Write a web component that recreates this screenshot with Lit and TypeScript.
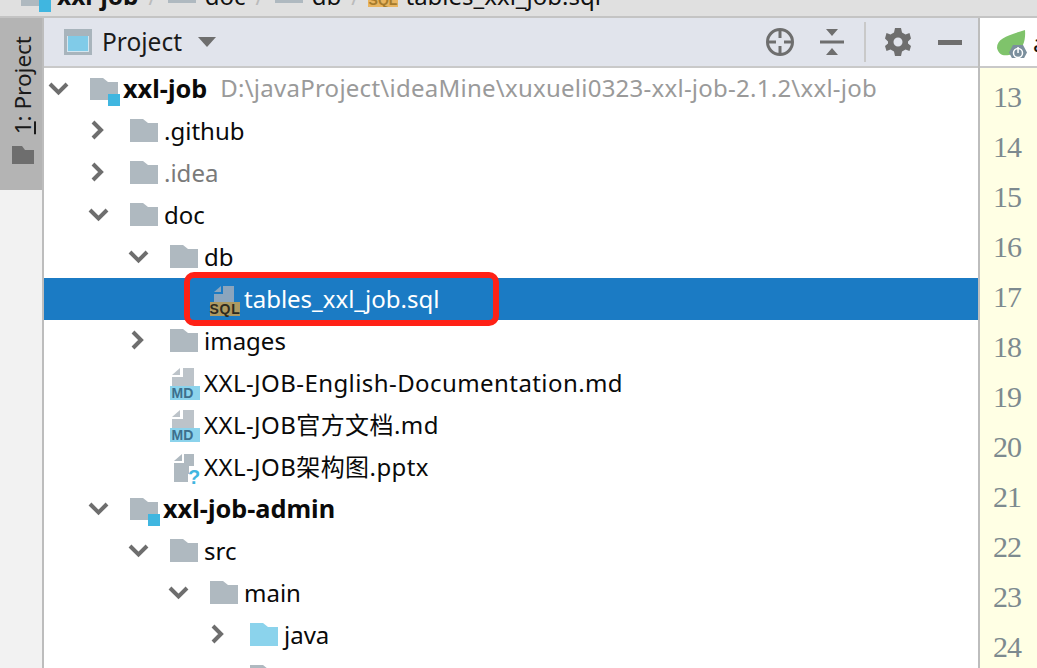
import { LitElement, html, css, svg } from "lit";
import { customElement } from "lit/decorators.js";

type Row = { depth: number; arrow?: "d" | "r"; icon: string; text: string; cls?: string; hint?: string };
const rows: Row[] = [
  { depth: 0, arrow: "d", icon: "module", text: "xxl-job", cls: "bold", hint: "D:\\javaProject\\ideaMine\\xuxueli0323-xxl-job-2.1.2\\xxl-job" },
  { depth: 1, arrow: "r", icon: "folder", text: ".github" },
  { depth: 1, arrow: "r", icon: "folder", text: ".idea", cls: "dim" },
  { depth: 1, arrow: "d", icon: "folder", text: "doc" },
  { depth: 2, arrow: "d", icon: "folder", text: "db" },
  { depth: 3, icon: "sql", text: "tables_xxl_job.sql", cls: "sel" },
  { depth: 2, arrow: "r", icon: "folder", text: "images" },
  { depth: 2, icon: "md", text: "XXL-JOB-English-Documentation.md", cls: "wide" },
  { depth: 2, icon: "md", text: "XXL-JOB官方文档.md", cls: "wide" },
  { depth: 2, icon: "unknown", text: "XXL-JOB架构图.pptx", cls: "wide" },
  { depth: 1, arrow: "d", icon: "module", text: "xxl-job-admin", cls: "bold" },
  { depth: 2, arrow: "d", icon: "folder", text: "src" },
  { depth: 3, arrow: "d", icon: "folder", text: "main" },
  { depth: 4, arrow: "r", icon: "blue", text: "java" },
  { depth: 4, icon: "folder", text: "" },
];

const folderPath = "M0 0H13L18 4H28V23H0Z";
function icon(kind: string) {
  if (kind === "folder" || kind === "blue") {
    return html`<svg class="ic" width="30" height="26" viewBox="0 0 30 26"><path d="${folderPath}" transform="translate(1 2)" fill="${kind === "blue" ? "#8bd3ec" : "#afb9c0"}"/></svg>`;
  }
  if (kind === "module") {
    return html`<svg class="ic" width="30" height="26" viewBox="0 0 30 26"><path d="M0 0H13L18 4H28V22H0Z" transform="translate(1 3)" fill="#afb9c0"/><rect x="19" y="19" width="12" height="12" fill="#40b6e0"/></svg>`;
  }
  if (kind === "sql") {
    return html`<svg class="ic" width="30" height="30" viewBox="-1 -3 30 30"><path d="M4 6L11 0V6Z" fill="#8ba5bd"/><path d="M13 0H24V16H4V8H13Z" fill="#8ba5bd"/><rect x="0" y="16" width="30" height="14" fill="#ad9a62"/><text x="15" y="28" text-anchor="middle" class="tag dark">SQL</text></svg>`;
  }
  if (kind === "md") {
    return html`<svg class="ic" width="30" height="32" viewBox="-1 -2 30 32"><path d="M2 7L10 0V7Z" fill="#bcc3c9"/><path d="M13 0H24V18H2V9H13Z" fill="#bcc3c9"/><rect x="0" y="18" width="30" height="14" fill="#8bd3ec"/><text x="12.5" y="30" text-anchor="middle" class="tag md">MD</text></svg>`;
  }
  return html`<svg class="ic" width="30" height="32" viewBox="-1 -4 30 32"><path d="M4 7L12 0V7Z" fill="#afb9c0"/><path d="M14 0H24V12H19V20H18V28H4V9H14Z" fill="#afb9c0"/><text x="24" y="30" text-anchor="middle" class="q">?</text></svg>`;
}

@customElement("app-root")
export class AppRoot extends LitElement {
  static styles = css`
    :host { display: block; width: 1037px; height: 668px; overflow: hidden; font-family: "Noto Sans", "Noto Sans CJK SC", sans-serif; background: #fff; }
    .crumbs { height: 16px; background: #e0e0e0; border-bottom: 2px solid #c4c4c4; overflow: hidden; }
    .crumbs-in { display: flex; align-items: flex-start; height: 30px; margin-top: -19px; padding-left: 20px; font-size: 24px; line-height: 30px; color: #111; white-space: nowrap; }
    .crumbs-in b { font-size: 24.5px; margin-left: 7px; }
    .sl { color: #bbb; margin: 0 10px 0 10px; font-size: 22px; }
    .cf { margin-top: -3px; margin-right: 8px; }
    .ctag { margin: 0 7px 0 -1px; }
    .ctag text { font-family: "Liberation Sans", sans-serif; font-weight: 700; font-size: 14px; fill: #a57b2c; }
    .main { display: flex; height: 650px; }
    .rail { width: 44px; flex: none; background: #f2f2f2; border-right: 2px solid #bdbdbd; box-sizing: border-box; }
    .tab { height: 172px; width: 42px; background: #b4b4b4; display: flex; flex-direction: column; align-items: center; padding: 18px 0 0 4px; box-sizing: border-box; gap: 12px; }
    .vert { writing-mode: vertical-rl; transform: rotate(180deg); font-size: 22.5px; color: #1a1a1a; line-height: 24px; }
    .vert u { text-decoration-thickness: 2px; }
    .panel { width: 934px; flex: none; display: flex; flex-direction: column; border-right: 2px solid #bdbdbd; }
    .head { height: 48px; background: #e1e4ec; border-bottom: 2px solid #c9c9c9; display: flex; align-items: center; }
    .pico { margin-left: 20px; flex: none; }
    .ptitle { font-size: 24.5px; color: #1a1a1a; margin-left: 10px; padding-bottom: 2px; }
    .caret { margin-left: 16px; }
    .spacer { flex: 1; }
    .tools { display: flex; align-items: center; padding-right: 16px; }
    .tools svg { flex: none; display: block; }
    .t2 { margin-left: 26px; }
    .sep { width: 2px; height: 40px; background: #c9c9c9; margin: 0 19px 0 20px; flex: none; }
    .t4 { margin-left: 27px; }
    .tree { flex: 1; overflow: hidden; display: flex; flex-direction: column; }
    .row { height: 42px; flex: none; display: flex; align-items: center; padding-bottom: 2px; font-size: 24px; line-height: 30px; color: #0a0a0a; white-space: nowrap; box-sizing: border-box; position: relative; }
    .row.sel { background: #1b7bc4; color: #fff; }
    .row:not(.bold) .name { padding-top: 2px; }
    .arrow { width: 26px; height: 26px; flex: none; margin-right: 17px; }
    .noarrow { width: 43px; flex: none; }
    .icwrap { width: 30px; display: flex; align-items: center; flex: none; margin-right: 5px; }
    .bold .name { font-weight: 700; font-size: 25.3px; margin-left: -1px; }
    .dim .name { color: #7a7a7a; }
    .wide .name { letter-spacing: 0.42px; }
    .hint { color: #9a9a9a; margin-left: 13px; letter-spacing: 0.25px; }
    .mark { position: absolute; left: 140px; top: -6px; width: 315px; height: 54px; border: 6px solid #ff2116; border-radius: 10px; box-sizing: border-box; pointer-events: none; }
    .ic { display: block; overflow: visible; }
    .tag { font-family: "Liberation Sans", sans-serif; font-weight: 700; font-size: 14px; }
    .tag.dark { fill: #2d2a20; letter-spacing: 0.8px; }
    .tag.md { fill: #3d6f8c; }
    .q { font-family: "Liberation Sans", sans-serif; font-weight: 700; font-size: 20px; fill: #40b6e0; }
    .editor { flex: 1; display: flex; flex-direction: column; min-width: 0; }
    .etab { height: 48px; border-bottom: 2px solid #c9c9c9; background: #fff; display: flex; align-items: center; padding-left: 17px; font-size: 24px; color: #111; overflow: hidden; gap: 2px; flex: none; }
    .etab svg { flex: none; }
    .gutter { flex: 1; background: #ffffe4; font-family: "Liberation Serif", "DejaVu Serif", serif; font-size: 30px; letter-spacing: -1px; color: #7d8a8f; padding: 4px 0 0 13px; overflow: hidden; }
    .gutter div { height: 50px; line-height: 50px; }
  `;

  render() {
    return html`
      <div class="crumbs"><div class="crumbs-in">
        ${icon("module")}<b>xxl-job</b><span class="sl">/</span>
        <svg class="cf" width="30" height="26" viewBox="0 0 30 26"><path d="${folderPath}" transform="translate(1 2)" fill="#afb9c0"/></svg>doc<span class="sl">/</span>
        <svg class="cf" width="30" height="26" viewBox="0 0 30 26"><path d="${folderPath}" transform="translate(1 2)" fill="#afb9c0"/></svg>db<span class="sl">/</span>
        <svg class="ctag" width="30" height="26" viewBox="0 0 30 26"><rect width="30" height="26" fill="#e8b45f"/><text x="15" y="24" text-anchor="middle">SQL</text></svg>tables_xxl_job.sql
      </div></div>
      <div class="main">
        <div class="rail">
          <div class="tab">
            <span class="vert"><u>1</u>: Project</span>
            <svg width="22" height="18" viewBox="0 0 22 18"><path d="M0 0H10L13 4H22V18H0Z" fill="#6e6e6e"/></svg>
          </div>
        </div>
        <div class="panel">
          <div class="head">
            <svg class="pico" width="28" height="26" viewBox="0 0 28 26"><rect x="1.5" y="1.5" width="25" height="23" fill="#d4e6f0" stroke="#a8b4bc" stroke-width="3"/><rect x="4" y="7" width="20" height="15" fill="#80cbe8"/><rect x="3" y="3" width="22" height="4" fill="#a8b4bc"/></svg>
            <span class="ptitle">Project</span>
            <svg class="caret" width="18" height="10" viewBox="0 0 18 10"><path d="M0 0H18L9 10Z" fill="#6e6e6e"/></svg>
            <span class="spacer"></span>
            <div class="tools">
              <svg width="28" height="28" viewBox="0 0 28 28" fill="none" stroke="#6e6e6e" stroke-width="3"><circle cx="14" cy="14" r="12.500"/><path d="M14 2V10M14 18V26M2 14H10M18 14H26"/></svg>
              <svg class="t2" width="24" height="26" viewBox="0 0 24 26"><path d="M6 0H18L12 7ZM12 19L18 26H6Z" fill="#6e6e6e"/><rect y="11.500" width="24" height="3" fill="#6e6e6e"/></svg>
              <span class="sep"></span>
              <svg width="26" height="28" viewBox="0 0 26 28"><path fill="#6e6e6e" fill-rule="evenodd" d="M10 0H16L17 4.500L20.500 6.500L24.500 5L26 10.500L23 13.500V15.500L26 18L24.500 23L20.500 21.500L17 23.500L16 28H10L9 23.500L5.500 21.500L1.500 23L0 18L3 15.500V13.500L0 10.500L1.500 5L5.500 6.500L9 4.500ZM13 9.500A4.500 4.500 0 1 0 13 18.500A4.500 4.500 0 1 0 13 9.500Z"/></svg>
              <svg class="t4" width="24" height="5" viewBox="0 0 24 5"><rect width="24" height="5" fill="#6e6e6e"/></svg>
            </div>
          </div>
          <div class="tree">
            ${rows.map((r) => html`
              <div class="row ${r.cls ?? ""}" style="padding-left:${2 + r.depth * 40}px">
                ${r.arrow
                  ? html`<svg class="arrow" viewBox="0 0 26 26" fill="none" stroke="#6e6e6e" stroke-width="4">${r.arrow === "d" ? svg`<path d="M4 9L12.500 17.500L21 9"/>` : svg`<path d="M7 5L15 13L7 21"/>`}</svg>`
                  : html`<span class="noarrow"></span>`}
                <span class="icwrap">${icon(r.icon)}</span>
                <span class="name">${r.text}</span>
                ${r.hint ? html`<span class="hint">${r.hint}</span>` : ""}
                ${r.cls === "sel" ? html`<span class="mark"></span>` : ""}
              </div>`)}
          </div>
        </div>
        <div class="editor">
          <div class="etab">
            <svg width="34" height="32" viewBox="0 0 34 32"><path d="M0 22C0 12 12 9 28 4C29 16 25 27 12 29C6 30 2 29 0 22Z" fill="#7fc36b"/><path d="M16 19H26L30 26.500L26 34H16L12 26.500Z" fill="#7b8f9d"/><circle cx="21" cy="27" r="4.500" fill="none" stroke="#fff" stroke-width="1.500"/><rect x="20.300" y="21" width="1.500" height="6" fill="#fff"/></svg>
            <span>a</span>
          </div>
          <div class="gutter">
            ${[13,14,15,16,17,18,19,20,21,22,23,24].map((n) => html`<div>${n}</div>`)}
          </div>
        </div>
      </div>
    `;
  }
}
